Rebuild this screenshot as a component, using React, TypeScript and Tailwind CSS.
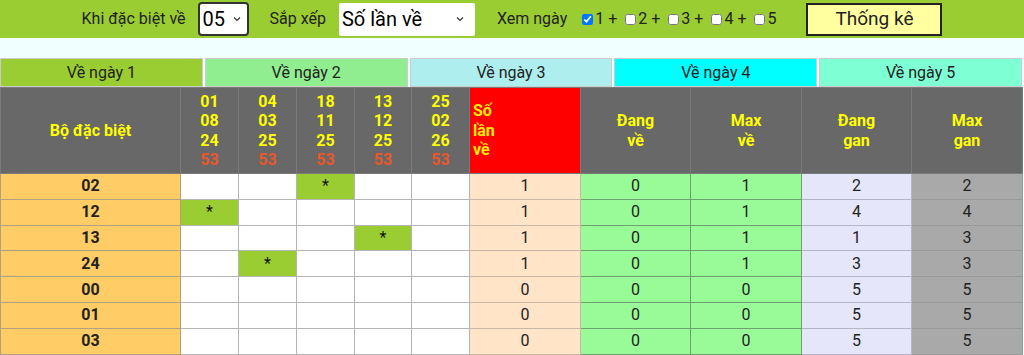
import React from "react";

const heads = [
  ["01", "08", "24"],
  ["04", "03", "25"],
  ["18", "11", "25"],
  ["13", "12", "25"],
  ["25", "02", "26"],
];

const rows: { k: string; star: number; so: number; dv: number; mv: number; dg: number; mg: number }[] = [
  { k: "02", star: 2, so: 1, dv: 0, mv: 1, dg: 2, mg: 2 },
  { k: "12", star: 0, so: 1, dv: 0, mv: 1, dg: 4, mg: 4 },
  { k: "13", star: 3, so: 1, dv: 0, mv: 1, dg: 1, mg: 3 },
  { k: "24", star: 1, so: 1, dv: 0, mv: 1, dg: 3, mg: 3 },
  { k: "00", star: -1, so: 0, dv: 0, mv: 0, dg: 5, mg: 5 },
  { k: "01", star: -1, so: 0, dv: 0, mv: 0, dg: 5, mg: 5 },
  { k: "03", star: -1, so: 0, dv: 0, mv: 0, dg: 5, mg: 5 },
];

const Chevron = () => (
  <svg width="10" height="6" viewBox="0 0 10 6" className="shrink-0">
    <path d="M2 1.5 L5 4.5 L8 1.5" fill="none" stroke="#333" strokeWidth="1.2" />
  </svg>
);

export default function App() {
  const tabs = [
    { t: "Về ngày 1", c: "bg-[#9acd32]" },
    { t: "Về ngày 2", c: "bg-[#90ee90]" },
    { t: "Về ngày 3", c: "bg-[#afeeee]" },
    { t: "Về ngày 4", c: "bg-[#00ffff]" },
    { t: "Về ngày 5", c: "bg-[#7fffd4]" },
  ];
  return (
    <div className="w-[1024px] h-[355px] overflow-hidden bg-[#f0ffff] font-['Roboto','Liberation_Sans',sans-serif] text-[#222]">
      <div className="h-[38px] bg-[#9acd32] flex items-center justify-center text-[16px]">
        <span className="text-[#222]">Khi đặc biệt về</span>
        <div className="ml-[12px] w-[51px] h-[34px] border-2 border-[#333] rounded-[4px] bg-white flex items-center justify-between pl-[3px] pr-[5px] text-[20px] text-black">
          <span>05</span>
          <Chevron />
        </div>
        <span className="ml-[21px]">Sắp xếp</span>
        <div className="ml-[13px] w-[136px] h-[33px] rounded-[2px] bg-white flex items-center justify-between pl-[3px] pr-[10px] text-[20px] text-black">
          <span>Số lần về</span>
          <Chevron />
        </div>
        <span className="ml-[22px]">Xem ngày</span>
        <div className="ml-[15px] flex items-center text-[16px]">
          {[1, 2, 3, 4, 5].map((n) => (
            <label key={n} className="flex items-center mr-[8px]">
              <input type="checkbox" defaultChecked={n === 1} className="w-[11px] h-[11px] m-0 mr-[2px]" />
              <span>{n}{n < 5 ? " +" : ""}</span>
            </label>
          ))}
        </div>
        <button className="ml-[22px] w-[136px] h-[33px] bg-[#ffffa0] border-2 border-[#222] text-[19px] text-[#222]">
          Thống kê
        </button>
      </div>
      <div className="h-[20px]" />
      <div className="flex gap-[2px] pr-[2px] h-[29px]">
        {tabs.map((tb) => (
          <div key={tb.t} className={`flex-1 border border-[#ccc] ${tb.c} flex items-center justify-center text-[16px] text-[#222]`}>
            {tb.t}
          </div>
        ))}
      </div>
      <table className="border-collapse w-[1022px] table-fixed text-[16px]">
        <colgroup>
          <col className="w-[180px]" />
          <col className="w-[58px]" />
          <col className="w-[58px]" />
          <col className="w-[58px]" />
          <col className="w-[57px]" />
          <col className="w-[58px]" />
          <col className="w-[111px]" />
          <col className="w-[110px]" />
          <col className="w-[111px]" />
          <col className="w-[110px]" />
          <col className="w-[111px]" />
        </colgroup>
        <thead>
          <tr className="h-[86px] font-bold text-[16px] leading-[19.5px]">
            <th className="bg-[#686868] text-[#ffff00] border border-[#7a7a7a]">Bộ đặc biệt</th>
            {heads.map((h, i) => (
              <th key={i} className="bg-[#686868] border border-[#7a7a7a] text-[#ffff00]">
                {h.map((x, j) => (
                  <div key={j}>{x}</div>
                ))}
                <div className="text-[#e8582a]">53</div>
              </th>
            ))}
            <th className="bg-[#ff0000] text-[#ffee00] border border-[#7a7a7a] text-left pl-[3px]">
              <div>Số</div>
              <div>lần</div>
              <div>về</div>
            </th>
            <th className="bg-[#686868] text-[#ffff00] border border-[#7a7a7a]"><div>Đang</div><div>về</div></th>
            <th className="bg-[#686868] text-[#ffff00] border border-[#7a7a7a]"><div>Max</div><div>về</div></th>
            <th className="bg-[#686868] text-[#ffff00] border border-[#7a7a7a]"><div>Đang</div><div>gan</div></th>
            <th className="bg-[#686868] text-[#ffff00] border border-[#7a7a7a]"><div>Max</div><div>gan</div></th>
          </tr>
        </thead>
        <tbody>
          {rows.map((r) => (
            <tr key={r.k} className="h-[25.8px] text-center">
              <td className="bg-[#ffcc66] font-bold text-[#222] border border-[#b0a080]">{r.k}</td>
              {[0, 1, 2, 3, 4].map((c) => (
                <td key={c} className={`${r.star === c ? "bg-[#9acd32]" : "bg-white"} border border-[#b5b5b5] text-[#111]`}>
                  {r.star === c ? "*" : ""}
                </td>
              ))}
              <td className="bg-[#ffe4c8] border border-[#c8b8a8]">{r.so}</td>
              <td className="bg-[#98fb98] border border-[#6fa06f]">{r.dv}</td>
              <td className="bg-[#98fb98] border border-[#6fa06f]">{r.mv}</td>
              <td className="bg-[#e6e6fa] border border-[#b5b5c5]">{r.dg}</td>
              <td className="bg-[#a9a9a9] border border-[#999]">{r.mg}</td>
            </tr>
          ))}
        </tbody>
      </table>
    </div>
  );
}
